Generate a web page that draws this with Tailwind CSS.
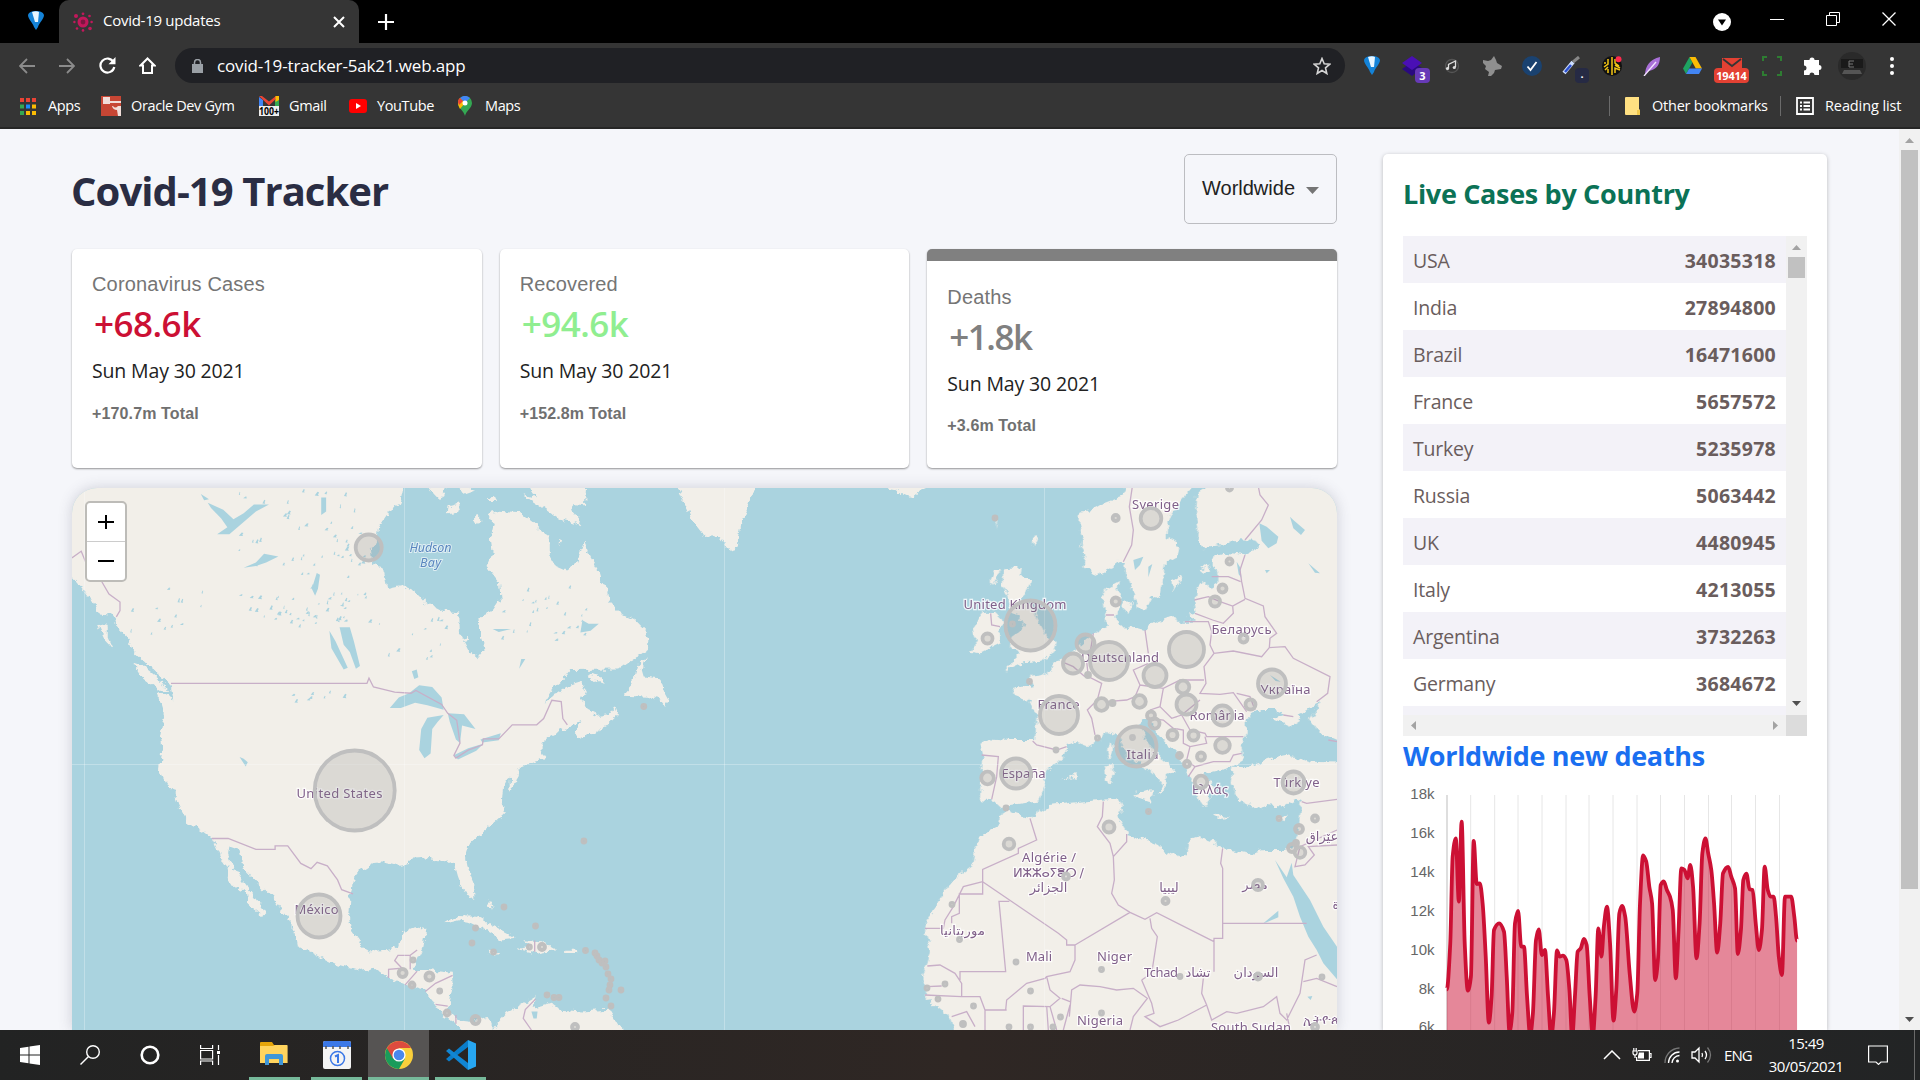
<!DOCTYPE html>
<html lang="en">
<head>
<meta charset="utf-8">
<title>Covid-19 updates</title>
<script src="https://cdn.jsdelivr.net/npm/@tailwindcss/browser@4"></script>
</head>
<body class="w-[1920px] h-[1080px] overflow-hidden flex flex-col bg-[#f5f6fa] font-['Open_Sans','Noto_Sans',sans-serif]">

<!-- Tab strip -->
<div class="h-[43px] shrink-0 bg-black flex text-white">
  <div class="w-[59px] flex items-center justify-center pl-3 pb-0.5">
    <svg class="w-4 h-[19px]" viewBox="0 0 16 19"><path d="M0 4C1 1 4 0 8 0s7 1 8 4c0 4-5 8-6 12l-2 3-2-3C5 12 0 8 0 4Z" fill="#1483d8"/><path d="M4 1C7 0 9 0 11 1l-1 10H7Z" fill="#e8f6ff"/></svg>
  </div>
  <div class="w-[300px] h-full bg-[#353535] rounded-t-[10px] flex items-center px-[14px]">
    <svg class="w-5 h-5 shrink-0" viewBox="0 0 20 20" fill="#c2185b"><circle cx="10" cy="10" r="5.5"/><circle cx="10" cy="10" r="2.4" fill="#7d1640"/><circle cx="3" cy="4" r="2"/><circle cx="10" cy="1.8" r="1.4"/><circle cx="16.5" cy="4" r="1.3"/><circle cx="1.4" cy="10" r="1.2"/><circle cx="18.6" cy="10" r="1.3"/><circle cx="4" cy="16.5" r="1.3"/><circle cx="10" cy="18.4" r="1.3"/><circle cx="17" cy="16.5" r="1.8"/></svg>
    <span class="ml-[10px] text-[15px] tracking-[-0.27px] flex-1 whitespace-nowrap pb-0.5">Covid-19 updates</span>
    <svg class="w-3 h-3" viewBox="0 0 12 12" stroke="#fff" stroke-width="2"><path d="M1 1l10 10M11 1L1 11"/></svg>
  </div>
  <div class="w-[54px] flex items-center justify-center"><svg class="w-4 h-4" viewBox="0 0 16 16" stroke="#fff" stroke-width="2.2"><path d="M8 0v16M0 8h16"/></svg></div>
  <div class="flex-1"></div>
  <div class="w-[55px] flex items-center"><svg class="w-[18px] h-[18px]" viewBox="0 0 18 18"><circle cx="9" cy="9" r="9" fill="#fff"/><path d="M5 6.5h8L9 12.5Z" fill="#000"/></svg></div>
  <div class="w-[152px] h-[38px] flex items-center gap-[42px] pl-[2px]">
    <svg class="w-[14px] h-[14px]" viewBox="0 0 14 14" stroke="#fff"><path d="M0 7.5h14"/></svg>
    <svg class="w-[14px] h-[14px]" viewBox="0 0 14 14" stroke="#fff" fill="none"><path d="M.5 3.5h10v10H.5ZM3.5 3V.5h10v10H11"/></svg>
    <svg class="w-[14px] h-[14px]" viewBox="0 0 14 14" stroke="#fff" stroke-width="1.3"><path d="M.5 .5l13 13M13.5 .5l-13 13"/></svg>
  </div>
</div>

<!-- Toolbar -->
<div class="h-[45px] shrink-0 bg-[#353535] flex items-center text-white">
  <div class="w-[175px] flex items-center gap-6 pl-[19px]">
    <svg class="w-4 h-4" viewBox="0 0 16 16" stroke="#8b8b8b" stroke-width="1.8" fill="none"><path d="M8 1L1 8l7 7M1 8h15"/></svg>
    <svg class="w-4 h-4" viewBox="0 0 16 16" stroke="#8b8b8b" stroke-width="1.8" fill="none"><path d="M8 1l7 7-7 7M0 8h15"/></svg>
    <svg class="w-[17px] h-[17px]" viewBox="0 0 17 17" stroke="#fff" stroke-width="2.2" fill="none"><path d="M14.5 5A7 7 0 1 0 15.3 10"/><path d="M16.5 0v7.200h-7Z" fill="#fff" stroke="none"/></svg>
    <svg class="-ml-px w-[17px] h-[17px]" viewBox="0 0 17 17" stroke="#fff" stroke-width="2" fill="none"><path d="M8.500 1.500L1.500 8.500H4V16h9V8.500h2.500Z"/></svg>
  </div>
  <div class="w-[1170px] h-[35px] bg-[#202125] rounded-full flex items-center pl-[17px] pr-[14px]">
    <svg class="w-[11px] h-[14px]" viewBox="0 0 11 14"><path d="M0 5h11v9H0Z" fill="#9aa0a6"/><path d="M2.500 5.500V3.500a3 3 0 0 1 6 0v2" stroke="#9aa0a6" stroke-width="1.500" fill="none"/></svg>
    <span class="ml-[14px] text-[17px] tracking-[-0.16px] flex-1">covid-19-tracker-5ak21.web.app</span>
    <svg class="w-[18px] h-[18px]" viewBox="0 0 18 18" stroke="#d4d4d4" stroke-width="1.600" fill="none"><path d="M9 1.500l2.200 5.300 5.600.4-4.300 3.700 1.300 5.600L9 13.500l-4.800 3 1.300-5.600L1.200 7.200l5.600-.4Z"/></svg>
  </div>
  <div class="w-[561px] pl-[7px] grid grid-cols-[repeat(14,40px)] justify-items-center items-center">
    <svg class="w-4 h-[19px]" viewBox="0 0 16 19"><path d="M0 4C1 1 4 0 8 0s7 1 8 4c0 4-5 8-6 12l-2 3-2-3C5 12 0 8 0 4Z" fill="#1483d8"/><path d="M4 1C7 0 9 0 11 1l-1 10H7Z" fill="#e8f6ff"/></svg>
    <div class="relative"><svg class="w-5 h-5" viewBox="0 0 20 20"><path d="M10 6l10 6-10 8L0 13Z" fill="#2a0a80"/><path d="M10 0l10 7-10 7L0 7Z" fill="#4a0fb5"/></svg><span class="absolute left-[13px] top-[12px] w-[15px] h-[15px] rounded-sm bg-[#673ab7] text-[11px] font-bold leading-[15px] text-center">3</span></div>
    <svg class="w-4 h-4" viewBox="0 0 16 16"><circle cx="8" cy="8" r="6.500" fill="none" stroke="#555" stroke-width="1.300"/><path d="M4.500 10V6.500L11.500 3v6" stroke="#ddd" stroke-width="1.300" fill="none"/><circle cx="3.500" cy="10.500" r="1.600" fill="#ddd"/><circle cx="10.300" cy="9.500" r="1.600" fill="#ddd"/></svg>
    <svg class="w-5 h-5" viewBox="0 0 20 20" fill="#8f8f8f"><path d="M1 4l5 1 3-1 3-4 2 4 1 3 5 3-1 3-6 1-1 3-3 3H6l1-4-4-3 1-3-3-3Z"/></svg>
    <svg class="w-5 h-5" viewBox="0 0 20 20"><circle cx="10" cy="10" r="10" fill="#1a4270"/><path d="M5.500 10.500l3 3.500 6-8" stroke="#fff" stroke-width="1.800" fill="none"/></svg>
    <div class="relative"><svg class="w-5 h-5" viewBox="0 0 20 20"><path d="M2 17L11 6" stroke="#cfe0ff" stroke-width="4"/><path d="M3 16L9 9" stroke="#2b50d0" stroke-width="2.500"/><path d="M11 6l6-5" stroke="#888" stroke-width="3"/></svg><span class="absolute left-[13px] top-[12px] w-[14px] h-[15px] rounded-sm bg-[#262a44] text-[11px] font-bold leading-[12px] text-center">.</span></div>
    <svg class="w-5 h-5" viewBox="0 0 20 20"><circle cx="10" cy="10" r="10" fill="#111"/><path d="M10 1v18M6 3v5L2 11M6 17v-4M3 14l3-3M13 3v4l4 3M13 17v-5l5 2M13 9l5 3M2 7h2" stroke="#f3c615" stroke-width="1.500" fill="none"/><circle cx="16.500" cy="3.200" r="3" fill="#ff2a4d"/></svg>
    <svg class="w-5 h-5" viewBox="0 0 20 20"><path d="M3 19C3 10 8 3 18 1c0 8-4 13-12 14Z" fill="#a970d8"/><path d="M2 20L14 6" stroke="#f3e5ff" stroke-width="1.300"/></svg>
    <svg class="w-[19px] h-[17px]" viewBox="0 0 19 17"><path d="M6.500 0L0 11.500 3 17 9.500 5.500Z" fill="#1ea362"/><path d="M6.500 0H12.500L19 11.500H12.800Z" fill="#fbbc04"/><path d="M3 17L6.200 11.500H19L16 17Z" fill="#4285f4"/></svg>
    <div class="relative"><svg class="w-5 h-5" viewBox="0 0 20 20"><path d="M0 2h20v12H0Z" fill="#e34133"/><path d="M1 3l9 7 9-7" stroke="#353535" stroke-width="1.800" fill="none"/></svg><span class="absolute left-[-8px] top-[12px] w-[35px] h-[15px] rounded-sm bg-[#e34133] text-[11px] font-bold leading-[15px] text-center tracking-[-0.2px]">19414</span></div>
    <svg class="w-5 h-5" viewBox="0 0 20 20" fill="none" stroke="#2e7d32" stroke-width="2"><path d="M1 5V1h4M15 1h4v4M19 15v4h-4M5 19H1v-4"/></svg>
    <svg class="w-[19px] h-[19px]" viewBox="0 0 19 19" fill="#fff"><path d="M1 4h5.500a2.500 2.500 0 1 1 5 0H16v5a2.500 2.500 0 1 1 0 5v5h-4.500a2.400 2.400 0 0 0-5 0H1v-4.500a2.500 2.500 0 0 0 0-5Z"/></svg>
    <svg class="w-7 h-7" viewBox="0 0 28 28"><circle cx="14" cy="14" r="14" fill="#2a2a2a"/><path d="M3 7h22v9H3Z" fill="#1a1a1a"/><path d="M11 9h5M11 9v6h5M11 12h4" stroke="#777" fill="none"/><path d="M6 18h16l2 4H4Z" fill="#555"/></svg>
    <svg class="w-1 h-5" viewBox="0 0 4 20" fill="#fff"><circle cx="2" cy="3" r="2"/><circle cx="2" cy="10" r="2"/><circle cx="2" cy="17" r="2"/></svg>
  </div>
</div>

<!-- Bookmarks bar -->
<div class="h-[41px] shrink-0 bg-[#353535] border-b-2 border-[#262626] flex items-center text-white text-[14.5px] tracking-[-0.37px] pl-[20px] pr-[18px] pb-[3px] whitespace-nowrap">
  <div class="w-[81px] flex items-center gap-3"><svg class="w-4 h-[17px]" viewBox="0 0 16 17"><g fill="#ea4335"><path d="M0 0h4v4H0ZM6 0h4v4H6ZM12 0h4v4h-4Z"/></g><path d="M0 6.500h4v4H0ZM0 13h4v4H0Z" fill="#34a853"/><path d="M6 6.500h4v4H6Z" fill="#1a8cff"/><path d="M12 6.500h4v4h-4ZM6 13h4v4H6ZM12 13h4v4h-4Z" fill="#fbbc04"/></svg>Apps</div>
  <div class="w-[158px] flex items-center gap-[10px]"><svg class="w-5 h-5" viewBox="0 0 20 20"><path d="M0 0h20v20H0Z" fill="#c74634"/><path d="M2 1h7v7H2Z" fill="#f1ddd9"/><path d="M9 5h11v2H9ZM12 10q2 3 5 0h3v10h-3l-1-6q-4 0-5-4Z" fill="#f1ddd9"/></svg>Oracle Dev Gym</div>
  <div class="w-[90px] flex items-center gap-[10px]"><svg class="w-5 h-5" viewBox="0 0 20 20"><path d="M0 1v9h4V4Z" fill="#4285f4"/><path d="M20 1v9h-4V4Z" fill="#34a853"/><path d="M0 0h3l7 5.500L17 0h3L10 9.500Z" fill="#ea4335"/><path d="M16.500 0H20v4l-3.500 2Z" fill="#fbbc04"/><path d="M0 10h20v10H0Z" fill="#eee"/><text x="0" y="19" font-size="10" font-weight="bold" textLength="20" lengthAdjust="spacingAndGlyphs" fill="#000" letter-spacing="0">100+</text></svg>Gmail</div>
  <div class="w-[109px] flex items-center gap-[10px]"><svg class="w-[18px] h-[14px]" viewBox="0 0 18 14"><rect width="18" height="14" rx="3" fill="#f00"/><path d="M7 4l5 3-5 3Z" fill="#fff"/></svg>YouTube</div>
  <div class="flex-1 flex items-center gap-[13px]"><svg class="w-[14px] h-5" viewBox="0 0 14 20"><path d="M7 20C6 15 0 12 0 7a7 7 0 0 1 14 0c0 5-6 8-7 13Z" fill="#34a853"/><path d="M0 7a7 7 0 0 1 2-5l5 5-5 6C1 11 0 9 0 7Z" fill="#fbbc04"/><path d="M2 2a7 7 0 0 1 10 0L7 7Z" fill="#4285f4"/><path d="M0 6q0-3 2-4l3 3-4 4Z" fill="#ea4335"/><circle cx="7" cy="7" r="2.500" fill="#fff"/></svg>Maps</div>
  <div class="w-px h-5 bg-[#6b6b6b]"></div>
  <svg class="ml-[15px] w-[15px] h-[18px]" viewBox="0 0 15 18"><path d="M0 1q0-1 1-1h13v12l1 1v5H1q-1 0-1-1Z" fill="#ffe082"/><path d="M12 13h3v5h-3Z" fill="#f2c94c"/></svg>
  <div class="ml-3 w-[116px] tracking-[-0.22px]">Other bookmarks</div>
  <div class="ml-3 w-px h-5 bg-[#6b6b6b]"></div>
  <svg class="ml-[15px] w-[18px] h-[18px]" viewBox="0 0 18 18" stroke="#fff" fill="none" stroke-width="1.800"><path d="M1 1h16v16H1ZM7.500 5.500H14M7.500 9H14M7.500 12.500H14M4 5.500h2M4 9h2M4 12.500h2"/></svg>
  <div class="ml-[11px] w-[77px] tracking-[-0.1px]">Reading list</div>
</div>

<!-- Page -->
<main class="flex-1 min-h-0 flex overflow-hidden">
  <section class="ml-[72px] w-[1265px] pt-[25px] flex flex-col shrink-0">
    <header class="flex justify-between items-start h-[95px]">
      <h1 class="text-[#2a2d43] font-bold text-[40px] leading-[54px] mt-[10px] -ml-px tracking-[-0.93px]">Covid-19 Tracker</h1>
      <div class="w-[153px] h-[70px] rounded-[5px] border border-[#bcbdc1] flex items-start pl-[17px] pt-[21px] text-[20px] leading-6 text-[#222] font-['Liberation_Sans',sans-serif]">Worldwide<svg class="ml-[11px] mt-[11px] w-[13px] h-[7px]" viewBox="0 0 13 7"><path d="M0 0h13L6.500 7Z" fill="#757575"/></svg></div>
    </header>
    <div class="grid grid-cols-3 gap-[18px] h-[219px]">
      <article class="bg-white rounded-[5px] shadow-[0_1px_2px_rgba(0,0,0,.4)] px-5 pt-[21px]">
        <p class="font-['Liberation_Sans',sans-serif] text-[20px] leading-7 text-[#757575] tracking-[0.17px]">Coronavirus Cases</p>
        <h2 class="text-[#cc1034] font-semibold text-[35px] leading-[52px] pl-[2px] tracking-[-0.5px]">+68.6k</h2>
        <p class="text-[19.500px] leading-7 mt-[7px] text-[#222] tracking-[-0.15px]">Sun May 30 2021</p>
        <p class="font-['Liberation_Sans',sans-serif] font-bold text-[16px] leading-6 mt-[17px] text-[#707070] tracking-[0.13px]">+170.7m Total</p>
      </article>
      <article class="bg-white rounded-[5px] shadow-[0_1px_2px_rgba(0,0,0,.4)] px-5 pt-[21px]">
        <p class="font-['Liberation_Sans',sans-serif] text-[20px] leading-7 text-[#757575] tracking-[0.17px]">Recovered</p>
        <h2 class="text-[#90ee90] font-semibold text-[35px] leading-[52px] pl-[2px] tracking-[-0.5px]">+94.6k</h2>
        <p class="text-[19.500px] leading-7 mt-[7px] text-[#222] tracking-[-0.15px]">Sun May 30 2021</p>
        <p class="font-['Liberation_Sans',sans-serif] font-bold text-[16px] leading-6 mt-[17px] text-[#707070] tracking-[0.13px]">+152.8m Total</p>
      </article>
      <article class="bg-white rounded-[5px] border-t-[12px] border-[#808080] shadow-[0_1px_2px_rgba(0,0,0,.4)] px-5 pt-[22px]">
        <p class="font-['Liberation_Sans',sans-serif] text-[20px] leading-7 text-[#757575] tracking-[0.17px]">Deaths</p>
        <h2 class="text-[#808080] font-semibold text-[35px] leading-[52px] pl-[2px] tracking-[-1.5px]">+1.8k</h2>
        <p class="text-[19.500px] leading-7 mt-[7px] text-[#222] tracking-[-0.15px]">Sun May 30 2021</p>
        <p class="font-['Liberation_Sans',sans-serif] font-bold text-[16px] leading-6 mt-[16px] text-[#707070] tracking-[0.13px]">+3.6m Total</p>
      </article>
    </div>
    <div class="relative mt-[20px] h-[542px] bg-[#aad3df] rounded-t-[25px] overflow-hidden shadow-[0_0_14px_rgba(70,70,90,.22)] shrink-0">
      <svg class="w-[1265px] h-[542px]" viewBox="72 488 1265 542" font-family="Noto Sans, DejaVu Sans, sans-serif" font-size="13">
        <filter id="coast" filterUnits="userSpaceOnUse" x="60" y="480" width="1290" height="560"><feTurbulence type="fractalNoise" baseFrequency=".14" numOctaves="3" seed="4"/><feDisplacementMap in="SourceGraphic" scale="8" xChannelSelector="R" yChannelSelector="G"/></filter>
        <g fill="#f2efe9" filter="url(#coast)">
          <g id="west" transform="translate(60,480) scale(.40816,.35077)">
            <path d="M5 0L845 0 835 60 828 75 800 95 780 130 775 170 762 200 765 240 790 245 802 308 835 300 870 318 890 345 935 372 978 378 980 440 1000 485 1022 508 1042 480 1030 440 1025 392 1060 375 1080 340 1075 290 1045 245 1060 205 1055 165 1062 130 1050 95 1075 88 1130 92 1160 120 1185 150 1200 160 1200 215 1215 245 1240 258 1265 240 1285 175 1300 220 1320 260 1325 280 1340 310 1345 345 1375 380 1410 400 1440 435 1438 485 1400 515 1370 540 1250 542 1235 565 1210 590 1185 635 1215 610 1240 590 1280 575 1290 600 1280 625 1290 655 1320 672 1345 668 1358 645 1367 670 1340 700 1270 740 1258 720 1275 690 1245 705 1200 730 1180 750 1180 775 1192 795 1160 805 1125 820 1115 860 1100 895 1103 845 1088 870 1085 920 1093 950 1060 985 1020 1020 1000 1040 993 1065 1000 1110 1015 1150 1015 1190 1003 1192 985 1160 975 1130 968 1100 950 1085 930 1090 905 1075 880 1078 855 1080 855 1095 835 1100 800 1090 765 1092 735 1115 718 1140 712 1185 708 1250 715 1285 740 1325 765 1348 800 1340 830 1330 840 1290 870 1275 898 1280 890 1330 875 1365 865 1397 900 1397 960 1405 962 1440 955 1490 950 1510 975 1540 1010 1545 1035 1530 1060 1550 1060 1590 1000 1590 970 1550 930 1515 915 1490 890 1455 850 1440 805 1420 770 1390 735 1400 670 1378 630 1355 580 1325 575 1290 555 1245 520 1190 480 1145 450 1105 440 1055 415 1045 412 1065 425 1105 445 1140 470 1180 490 1210 505 1235 497 1245 460 1210 455 1175 425 1160 408 1130 412 1110 395 1080 372 1020 350 1000 312 975 290 925 280 890 258 860 245 825 250 780 245 730 255 670 238 605 278 625 270 580 215 530 180 490 165 450 140 420 130 385 95 380 75 340 45 295 5 240Z"/>
            <path d="M1060 1590L1060 1568 1095 1515 1130 1495 1165 1470 1158 1505 1200 1490 1225 1510 1280 1515 1345 1510 1365 1550 1410 1590ZM1440 500L1425 540 1430 560 1470 565 1480 600 1492 625 1485 650 1470 625 1440 618 1380 615 1400 590 1415 530ZM178 520L205 530 245 570 268 605 245 600 200 560ZM93 412L117 420 117 450 130 483 112 460ZM940 1265L970 1243 1020 1245 1060 1270 1118 1305 1080 1310 1050 1285 1010 1262 975 1255ZM1135 1312L1180 1315 1218 1340 1172 1350 1120 1338 1152 1330ZM1240 1342h27v9h-27ZM1050 1342l30 6-10 8-18-5ZM1288 552L1320 560 1335 578 1310 572ZM1050 1195l8 12 2 18-10-18ZM890 0l60 0-20 60-18-22ZM960 0l60 30-30 12ZM952 75l25-8 5 15-22 18-10-10ZM1017 95l10 5 0 25-10-5ZM1045 55l15-5 12 10-20 0ZM1138 0L1290 0 1286 75 1262 72 1252 85 1283 130 1230 105 1190 75 1165 50ZM1130 40l60 20 80 68-45-15-50-40ZM985 450l15-5 5 10-15 3ZM1220 170l8 5-5 10Z"/>
          </g>
          <path d="M678 480L678 488 686 506 694 524 704 537 718 536 726 547 733 551 738 545 742 520 748 505 755 488 755 480ZM883 480L883 488 895 490 902 495 912 497 920 491 927 488 927 480Z"/>
          <g id="east" transform="translate(900,480) scale(.33333)">
            <path d="M690 0L665 50 600 75 575 90 540 95 538 130 550 165 540 200 558 235 553 262 590 285 625 270 660 245 675 250 680 290 700 340 715 390 740 385 755 355 780 345 790 290 795 250 830 230 838 205 825 185 800 170 803 120 830 80 880 20 960 0 890 40 885 95 895 150 890 180 910 205 960 195 1030 178 1070 185 1080 200 1035 225 985 220 935 230 935 260 955 275 955 310 930 325 910 300 888 325 883 365 890 400 860 408 885 425 830 425 820 408 760 430 735 450 700 440 680 448 660 430 645 410 655 380 665 350 655 330 660 303 620 325 608 350 615 400 620 440 580 460 555 480 530 500 500 535 465 545 460 570 430 585 390 590 400 615 335 630 345 645 385 660 410 700 405 780 330 780 265 775 240 795 250 830 245 870 243 958 280 962 305 985 330 975 375 968 415 965 435 915 430 890 455 860 500 820 500 795 530 785 570 800 600 775 630 755 655 770 680 830 715 850 750 872 775 895 790 915 768 945 780 940 800 915 797 885 828 880 800 850 765 820 735 775 720 740 725 715 750 715 760 745 800 790 835 820 850 850 865 880 880 905 890 935 895 960 915 985 930 965 925 945 955 940 925 900 915 880 960 870 1000 860 1030 840 1025 800 1040 760 1040 720 1060 700 1090 690 1120 690 1150 705 1118 715 1170 740 1210 715 1190 705 1240 680 1265 665 1230 720 1260 760 1340 795 1340 0Z"/>
            <path d="M310 265L365 262 362 290 395 300 375 340 355 360 390 370 415 420 440 470 470 485 462 520 420 545 370 550 315 575 345 540 365 520 330 500 335 470 350 460 372 440 355 405 335 400 325 350 308 320ZM250 400L285 395 310 420 300 440 302 490 240 520 213 515 230 490 218 440ZM635 785l4 30-10 25-8-30ZM612 860l26-8 3 30-8 25-18-5ZM700 940L760 930 752 965 712 952ZM936 1003l58 10-40 4ZM1130 1015l35-12-15 18ZM820 300l25-12-22 45ZM665 370l30-8-10 40-15-15ZM405 165l10 10-12 30-4-20ZM285 270l15 0-20 45-8-15ZM288 103l6 8-6 32ZM900 270l25-20 5 25-18 4ZM485 900l20-8 25-10 0 12-15-3-20 10Z"/>
            <path d="M1000 860L1040 862 1130 830 1160 825 1230 845 1340 848 1340 1125 1200 1125 1195 1050 1205 965 1190 958 1150 980 1100 975 1080 990 1040 975 1010 950 995 910Z"/>
            <path d="M315 990L325 990 345 1000 390 1015 450 975 540 965 600 960 655 955 668 980 655 1010 680 1050 680 1065 760 1085 790 1110 845 1132 860 1120 865 1080 900 1068 935 1080 970 1105 1040 1120 1095 1110 1150 1110 1175 1105 1200 1050 1340 1050 1340 1690 170 1690 150 1610 110 1580 75 1550 80 1525 65 1490 80 1460 90 1410 75 1350 80 1320 110 1280 130 1240 160 1200 215 1160 225 1110 240 1070 290 1040 300 1010Z"/>
          </g>
        </g>
        <g fill="#aad3df">
          <g transform="translate(900,480) scale(.33333)">
            <path d="M1125 1140L1160 1192 1175 1148 1180 1185 1230 1260 1270 1340 1311 1400 1311 1498 1270 1450 1250 1410 1225 1370 1200 1310 1180 1250 1150 1195ZM1078 130L1100 140 1135 170 1130 190 1105 205 1085 182ZM1170 110L1180 120 1215 150 1203 165 1180 145ZM1225 250l35 30-15-2ZM1095 270l15 0-10 10ZM700 240l30-10-10 25-15 15ZM745 260l12-8-12 40ZM540 480l12-8 0 20-10 8ZM1110 585l32 20-15-2ZM1010 245l12 20 2 28-8-10ZM1090 1330l45-38 0 20-35 15ZM1222 1550l15-2-5 12Z"/>
          </g>
          <g transform="translate(60,480) scale(.40816,.35077)">
            <path d="M808 650L830 620 855 608 880 585 912 590 935 620 940 655 900 642 870 635 835 650ZM900 678L940 670 925 690 912 710 908 780 893 793 880 770 885 710ZM950 665L990 668 1018 710 985 700 980 750 970 740 955 690ZM965 785L1000 765 1037 752 1020 772 975 797ZM1030 740L1080 722 1075 742 1035 748ZM685 420L710 420 720 460 735 530 725 538 710 490 695 470ZM660 430l15 30 30 75-10 5-30-60ZM385 155L410 135 395 110 370 80 362 65 400 85 425 112 450 95 475 70 512 70 480 90 440 130 415 155ZM450 250L480 235 500 210 535 218 505 235 480 245ZM625 330l-8-20 12-45 8 5-5 40ZM640 50l12 0 0 40-12 10ZM862 545l12-5 4 22-10 5ZM1280 400l15 10 25 0-20 20-25 5ZM1060 425l35 0 10 0-30 8ZM1130 510l10 0-15 28ZM440 790l10 5 10 10-5 12ZM1155 1515l15 0-2 20-8 0ZM345 40l20 15-12 3ZM820 870l2-15Z"/>
            <g id="lakes"></g>
          </g>
        </g>
        <g fill="none" stroke="#c8afc8" stroke-width="1.300">
          <g transform="translate(60,480) scale(.40816,.35077)">
            <path vector-effect="non-scaling-stroke" d="M29 222L52 203 65 240M100 285L120 325 147 348 147 372 138 390M272 580H752L757 565 768 590 820 605 860 608 872 600 935 640 950 665 972 685 980 750 965 785 970 793 1000 770 1035 755 1037 738 1075 738 1108 698 1168 698 1185 680 1205 628 1228 632 1232 680 1243 698M372 1022H412L480 1053H527V1043H558L590 1093 615 1108 630 1090 655 1100 680 1140 690 1168 718 1180M805 1420V1395L838 1392 820 1370 828 1355H858V1395M845 1440L875 1400M895 1458L920 1435 962 1412M920 1495L950 1500M970 1525V1550M1165 1480L1140 1510 1135 1535 1155 1568M1163 1313V1345M858 1355L875 1340"/>
          </g>
          <g transform="translate(900,480) scale(.33333)">
            <path vector-effect="non-scaling-stroke" d="M697 20L688 80 700 150 695 195 670 245M1075 20L1080 45 1105 75 1085 120 1035 180M1035 225L1020 270 1025 305 1035 355 1090 378 1095 410 1130 460 1110 475 1108 503 1155 500 1180 535 1290 590 1283 640 1250 665M935 290L985 290 1022 305M883 360L925 350 960 365 998 378 1035 358M998 378L1000 400 970 430 938 420 885 400M855 425H925L935 455 930 495 942 520 1000 513 1085 530 1108 503M942 520L912 560 918 610 900 640 960 643 1000 638 1040 695M1010 640L1050 650 1065 690M735 450L745 520M745 550L700 570 720 615 705 650 680 660 620 665M580 460L570 520 560 545 565 590 605 610 592 660 562 690 575 715 585 765M485 545L520 560 555 590M720 615L790 625 840 600 912 600M790 625L780 680 750 690M780 680L815 715 845 705 900 660M845 705L870 750 915 760 920 770 1030 770M750 715L790 720 820 745 850 750 850 790 870 800 920 790 915 770M870 800L860 840 885 860 940 845 990 845 1000 825 1025 820M865 890L885 860M398 783L410 795 470 810 500 800M245 825L295 830 290 890 275 958M272 400L275 435 300 440M618 405H642M1150 705L1180 710M1285 780L1311 785M1205 965L1220 970 1311 958M1311 1050L1200 1100 1185 1160 1215 1155 1243 1125 1225 1100 1311 1095"/>
            <path vector-effect="non-scaling-stroke" d="M390 1015L410 1080 355 1105 355 1120 248 1168V1242H178V1300L155 1310V1330M248 1205L190 1220 160 1280 135 1320 130 1345H75M248 1205L475 1360 500 1380V1395H525V1440L510 1475 440 1490 435 1495 380 1510 320 1560 317 1590M328 1264H297L317 1475H180V1500M610 965L607 1010 592 1040 630 1090 640 1130 643 1200 635 1240 655 1275 690 1297 735 1318 770 1298 942 1385M680 1062V1085L640 1130M690 1297L525 1395M968 1105L962 1150 968 1165V1375H942V1475M968 1330H1220M750 1315L755 1345 772 1370 755 1480 725 1500M82 1458L120 1455 165 1480 185 1510V1550M75 1545L185 1550 240 1550 255 1590 320 1590M508 1610L515 1530 540 1515 600 1520 650 1530 700 1525 742 1555 700 1610 690 1650M725 1500L755 1570 762 1600 735 1610 780 1640 835 1620 920 1575 905 1540 910 1495M920 1575L935 1620 980 1595 1010 1600 1090 1580 1130 1550 1140 1600 1160 1620 1200 1540 1215 1440 1250 1425M1210 1505L1250 1495 1311 1520M440 1490L450 1530 480 1555 450 1580 370 1578V1650M440 1578L445 1650M450 1580L470 1650M485 1555L510 1565M490 1650L510 1575M255 1590L255 1650M155 1610L200 1595 225 1640M1160 1600L1170 1650M80 1520L125 1518"/>
          </g>
        </g>
        <path d="M84.500 488v542M404.500 488v542M724.500 488v542M1044.500 488v542M72 764.500h1266" stroke="#fff" stroke-opacity=".28" fill="none"/>
        <g fill="#80608a" text-anchor="middle" stroke="#fff" stroke-opacity=".8" stroke-width="2.500" paint-order="stroke">
          <text x="339.500" y="798" textLength="86">United States</text>
          <text x="316.500" y="914" textLength="44">México</text>
          <text x="1155.500" y="509" textLength="47">Sverige</text>
          <text x="1015" y="609" textLength="103">United Kingdom</text>
          <text x="1241.500" y="634" textLength="60">Беларусь</text>
          <text x="1120" y="662" textLength="78">Deutschland</text>
          <text x="1285.500" y="694" textLength="50">Україна</text>
          <text x="1058.500" y="709" textLength="42">France</text>
          <text x="1217" y="720" textLength="55">România</text>
          <text x="1142.500" y="759" textLength="32">Italia</text>
          <text x="1023.500" y="778" textLength="44">España</text>
          <text x="1210" y="794" textLength="36">Ελλάς</text>
          <text x="1296.500" y="787" textLength="46">Türkiye</text>
          <text x="1049" y="862" textLength="54">Algérie /</text>
          <text x="1048.500" y="877" font-family="DejaVu Sans" textLength="71">ⵍⵣⵣⴰⵢⴻⵔ /</text>
          <text x="1048.500" y="892" font-family="DejaVu Sans">الجزائر</text>
          <text x="1169" y="892" font-family="DejaVu Sans">ليبيا</text>
          <text x="1255" y="889" font-family="DejaVu Sans">مصر</text>
          <text x="1322" y="841" font-family="DejaVu Sans">عێراق</text>
          <text x="1336" y="909" font-family="DejaVu Sans">ة</text>
          <text x="962.500" y="935" font-family="DejaVu Sans" textLength="45">موريتانيا</text>
          <text x="1039" y="961" textLength="26">Mali</text>
          <text x="1114.500" y="961" textLength="35">Niger</text>
          <text x="1161" y="977" textLength="34">Tchad</text>
          <text x="1198" y="977" font-family="DejaVu Sans">تشاد</text>
          <text x="1256" y="977" font-family="DejaVu Sans">السودان</text>
          <text x="1100" y="1025" textLength="46">Nigeria</text>
          <text x="1251" y="1032" textLength="80">South Sudan</text>
          <text x="1303" y="1024" text-anchor="start">ኢትዮጵያ</text>
        </g>
        <g fill="#5a87bf" text-anchor="middle" font-style="italic" stroke="#fff" stroke-opacity=".6" stroke-width="2" paint-order="stroke" font-size="12.500"><text x="430.500" y="552" textLength="42">Hudson</text><text x="430.500" y="567" textLength="21">Bay</text></g>
        <g id="cases" fill="#808080" fill-opacity=".2" stroke="#bfbfbf" stroke-width="3.800"></g>
      </svg>
      <div class="absolute left-[13px] top-[13px] w-[42px] h-[81px] rounded-[5px] border-2 border-[#bdbcb8] bg-white grid grid-rows-2 divide-y divide-[#ccc]">
        <div class="grid place-items-center"><svg class="w-4 h-4" viewBox="0 0 16 16" stroke="#000" stroke-width="2"><path d="M8 1v14M0 8h16"/></svg></div>
        <div class="grid place-items-center"><svg class="w-4 h-4" viewBox="0 0 16 16" stroke="#000" stroke-width="2"><path d="M0 8h16"/></svg></div>
      </div>
    </div>
  </section>

  <aside class="ml-[46px] mt-[25px] w-[444px] bg-white rounded-t-[5px] shadow-[0_1px_4px_rgba(0,0,0,.25)] px-5 shrink-0">
    <h3 class="text-[#0b7256] font-bold text-[27px] leading-9 pt-[22px] tracking-[-0.32px] whitespace-nowrap">Live Cases by Country</h3>
    <div class="mt-[24px] w-[404px] grid grid-cols-[383px_21px]">
      <div id="countries" class="h-[479px] overflow-hidden text-[#6a5d5d] text-[19.500px]"></div>
      <div class="bg-[#f1f1f1] flex flex-col items-center justify-between pt-[9px] pb-[9px]">
        <div class="flex flex-col items-center gap-[7px]"><svg class="w-[9px] h-[5px]" viewBox="0 0 9 5"><path d="M0 5h9L4.500 0Z" fill="#a3a3a3"/></svg><div class="w-[17px] h-[21px] bg-[#c1c1c1]"></div></div>
        <svg class="w-[9px] h-[5px]" viewBox="0 0 9 5"><path d="M0 0h9L4.500 5Z" fill="#505050"/></svg>
      </div>
      <div class="h-[21px] bg-[#f1f1f1] flex items-center justify-between px-2">
        <svg class="w-[5px] h-[9px]" viewBox="0 0 5 9"><path d="M5 0v9L0 4.500Z" fill="#a3a3a3"/></svg>
        <svg class="w-[5px] h-[9px]" viewBox="0 0 5 9"><path d="M0 0v9L5 4.500Z" fill="#a3a3a3"/></svg>
      </div>
      <div class="bg-[#dcdcdc]"></div>
    </div>
    <h3 class="text-[#1a6ff0] font-bold text-[27px] leading-9 pt-[2px] tracking-[-0.3px] whitespace-nowrap">Worldwide new deaths</h3>
    <svg class="mt-[9px] w-[404px] h-[250px]" viewBox="1403 783 404 250" font-family="Liberation Sans, sans-serif" font-size="15" fill="#666" text-anchor="end">
      <text x="1434.500" y="799">18k</text><text x="1434.500" y="838">16k</text><text x="1434.500" y="877">14k</text><text x="1434.500" y="916">12k</text><text x="1434.500" y="955">10k</text><text x="1434.500" y="994">8k</text><text x="1434.500" y="1032">6k</text>
      <path d="M1447 795v240" stroke="#bdbdbd"/>
      <path d="M1470.700 795v240M1494.700 795v240M1518 795v240M1542 795v240M1566 795v240M1589 795v240M1613 795v240M1637 795v240M1660.500 795v240M1684.500 795v240M1708.500 795v240M1731.500 795v240M1755.500 795v240M1779.500 795v240" stroke="#e6e6e6"/>
      <g transform="translate(1380,730) scale(.34439,.33333)">
        <path id="area" fill="#cc1034" fill-opacity=".5"/>
        <path id="line" fill="none" stroke="#cc1034" stroke-width="3.800" vector-effect="non-scaling-stroke" stroke-linejoin="round"/>
      </g>
    </svg>
  </aside>

  <div class="ml-auto w-[21px] bg-[#f1f1f1] flex flex-col items-center shrink-0 pt-[9px]">
    <svg class="w-[9px] h-[5px]" viewBox="0 0 9 5"><path d="M0 5h9L4.500 0Z" fill="#a3a3a3"/></svg>
    <div class="mt-[7px] w-[17px] h-[739px] bg-[#c1c1c1]"></div>
    <svg class="mt-[128px] w-[9px] h-[5px]" viewBox="0 0 9 5"><path d="M0 0h9L4.500 5Z" fill="#505050"/></svg>
  </div>
</main>

<!-- Taskbar -->
<footer class="relative z-10 h-[50px] shrink-0 bg-linear-to-r from-[#222323] via-[#2f2724] to-[#222425] flex text-white">
  <div class="w-[60px] flex items-center justify-center"><svg class="w-5 h-5" viewBox="0 0 20 20" fill="#fff"><path d="M0 3l8.500-1.200V9.500H0ZM9.500 1.600L20 0v9.500H9.500ZM0 10.500h8.500v7.700L0 17ZM9.500 10.500H20V20L9.500 18.400Z"/></svg></div>
  <div class="w-[60px] flex items-center justify-center"><svg class="w-5 h-5" viewBox="0 0 20 20" fill="none" stroke="#fff" stroke-width="1.400"><circle cx="13" cy="7" r="6.300"/><path d="M8.500 11.500L.5 19.500"/></svg></div>
  <div class="w-[60px] flex items-center justify-center"><svg class="w-5 h-5" viewBox="0 0 20 20" fill="none" stroke="#fff" stroke-width="2.600"><circle cx="10" cy="10" r="8.300"/></svg></div>
  <div class="w-[63px] flex items-center pl-[20px]"><svg class="w-5 h-5" viewBox="0 0 20 20" fill="none" stroke="#fff" stroke-width="1.200"><path d="M.6 0v3.500h12V0M.6 5.500h12v8.500H.6ZM.6 20v-4h12v4M18.500 0v5M18.500 10v10"/><path d="M17 6h3v3h-3Z" fill="#fff" stroke="none"/></svg></div>
  <div class="w-[62px] flex flex-col items-center justify-end gap-[11px]">
    <svg class="w-7 h-6" viewBox="0 0 28 24"><path d="M0 1q0-1 1-1h11l2 3h13v4H0Z" fill="#e5a50a"/><path d="M0 4h13l2-1h12q.6 0 .6 1v17H0Z" fill="#ffd45e"/><path d="M5 23V14q0-2 2-2h14q2 0 2 2v9h-4v-6H9v6Z" fill="#3f97d9"/></svg>
    <div class="w-[51px] h-[3px] bg-[#76b99a]"></div></div>
  <div class="w-[63px] flex flex-col items-center justify-end gap-[8px]">
    <svg class="w-7 h-7" viewBox="0 0 28 28"><rect width="28" height="28" rx="2" fill="#f4f4f4"/><path d="M0 2q0-2 2-2h24q2 0 2 2v4H0Z" fill="#3b78e7"/><path d="M3 5v3M10 5v3M17 5v3M25 5v3" stroke="#555" stroke-width="1.500"/><circle cx="14.500" cy="17.500" r="7" fill="none" stroke="#3b78e7" stroke-width="1.500"/><path d="M12 15.500l3-1.500v8" stroke="#3b78e7" stroke-width="2" fill="none"/></svg>
    <div class="w-[51px] h-[3px] bg-[#76b99a]"></div></div>
  <div class="w-[61px] flex flex-col items-center justify-end gap-[8px] bg-[#565453]">
    <svg class="w-7 h-7" viewBox="0 0 28 28"><circle cx="14" cy="14" r="14" fill="#f9cf3b"/><path d="M14 14L1.900 7A14 14 0 0 0 14 28l6-10.500Z" fill="#1a9c5b"/><path d="M14 7h12.100A14 14 0 0 0 1.900 7l6 10.500Z" fill="#dd4b3e"/><circle cx="14" cy="14" r="6.600" fill="#fff"/><circle cx="14" cy="14" r="5.300" fill="#4a88ee"/></svg>
    <div class="w-[61px] h-[3px] bg-[#76b99a]"></div></div>
  <div class="w-[63px] flex flex-col items-center justify-end gap-[7px]">
    <svg class="w-[30px] h-[30px]" viewBox="0 0 30 30"><path d="M22 7L3 21.500 0 19 22 0Z" fill="#0a7cc9"/><path d="M22 23L3 8.500 0 11l22 19Z" fill="#1186d4"/><path d="M22 0l8 3.500v23L22 30Z" fill="#27a7f2"/></svg>
    <div class="w-[51px] h-[3px] bg-[#76b99a]"></div></div>
  <div class="ml-auto w-[317px] flex items-center">
    <svg class="w-[18px] h-[10px]" viewBox="0 0 18 10" fill="none" stroke="#fff" stroke-width="1.500"><path d="M1 9l8-8 8 8"/></svg>
    <svg class="ml-[11px] w-[20px] h-[14px]" viewBox="0 0 20 14" fill="none" stroke="#fff" stroke-width="1.200"><path d="M6 2.600h11.400v9.800H4.600V9M17.400 5.500H19v4h-1.600"/><path d="M7 4.500h5v6H6V8Z" fill="#fff" stroke="none"/><path d="M1 3h4v2q0 2-2 2t-2-2ZM1.800 0v3M4.200 0v3M3 7v3"/></svg>
    <svg class="ml-[12px] w-[16px] h-[16px]" viewBox="0 0 16 16" fill="none" stroke="#fff" stroke-width="1.300"><path d="M1 16A15 15 0 0 1 15.500 1" stroke="#777"/><path d="M4.500 16A11 11 0 0 1 15.500 5M8 16a8 8 0 0 1 7.500-7.500"/><circle cx="13.500" cy="14" r="1.500" fill="#fff" stroke="none"/></svg>
    <svg class="ml-[11px] w-[21px] h-[18px]" viewBox="0 0 21 18" fill="none" stroke="#fff" stroke-width="1.300"><path d="M1 6h3l4-4v14l-4-4H1ZM11 7q1 2 0 4M14 5q3 4 0 8"/><path d="M16.500 1.500q6 7.500 0 15" stroke="#777"/></svg>
    <span class="ml-[12px] w-[30px] text-[15px] tracking-[-0.9px]">ENG</span>
    <div class="ml-[12px] w-[80px] text-center text-[15px] leading-[23px] tracking-[-0.5px] whitespace-nowrap">15:49<br>30/05/2021</div>
    <svg class="ml-[22px] w-[20px] h-[20px]" viewBox="0 0 20 20" fill="none" stroke="#fff" stroke-width="1.200"><path d="M.6 1h18.800v16h-6.500L10.500 19.400 8 17H.6Z"/></svg>
    <div class="ml-auto mr-[5px] w-px h-full bg-[#6a6a6a]"></div>
  </div>
</footer>

<script>
// Country table
const rows = [['USA',34035318],['India',27894800],['Brazil',16471600],['France',5657572],['Turkey',5235978],['Russia',5063442],['UK',4480945],['Italy',4213055],['Argentina',3732263],['Germany',3684672],['','']];
document.getElementById('countries').innerHTML = rows.map(([c,n],i)=>
  `<div class="h-[47px] flex items-center justify-between px-[10px] pt-[3px] ${i%2?'bg-white':'bg-[#f3f2f8]'}"><span class="tracking-[-0.2px]">${c}</span><strong class="font-bold tracking-[0.27px]">${n}</strong></div>`).join('');

// Circle markers: x, y, radius
const cases = [[354.700,790.500,40],[319,916,21.500],[368.700,547.500,13],[643.800,706.500,1.500],[583.900,841,1.500],[504,907,1.500],[535.500,926,1.500],[475.500,928,1.500],[472,943,1.500],[493.500,952,1.500],[529.400,947,1.500],[542,947,3],[413,960,1.500],[402.600,973,4],[429.400,976.500,4],[412,985,2.500],[439.700,991,1.500],[447,1013,2.500],[475.500,1020,4],[575,1027,3],[585.500,950.500,1.500],[595,953,1.500],[597,956,1.500],[599,960,1.500],[602,963,1.500],[605,961,1.500],[606,967,1.500],[608,974,1.500],[611,979,1.500],[610,985,1.500],[609,990,1.500],[621,990,1.500],[606,998,1.500],[611,1006,1.500],[547,995,1.500],[554,997.500,1.500],[559,997.500,1.500],
[995,518,1.500],[1115.700,518,3],[1151,518.500,10.300],[1229.500,488,2.500],[1229.500,561.500,3],[1222.500,588.500,4],[1215,601.500,5],[1115.700,601.500,4],[1030.500,625.500,25],[1012.500,624,1.500],[987.500,638.500,5],[1085.500,643.500,9],[1073,663.500,10],[1088,675,2],[1109,661,19],[1186.500,649.500,17.500],[1155,675.500,11.500],[1183,687,6.300],[1272,683.500,14],[1243.500,638.500,4],[1029.500,681.500,1.500],[1059,715,19],[1101.500,704.500,6.300],[1112.500,703,2],[1139.500,701.500,6.300],[1151,715.500,4],[1154.500,723.500,5],[1186.500,704.500,10],[1222.500,715.500,10],[1250.500,704.500,5],[1172.500,735,5],[1193.500,735.500,5],[1222.500,745.500,7.300],[1136.500,746.500,20],[1132.500,737.500,1.500],[1097.500,738,1.500],[1056,750,1.500],[1179.500,755.500,2.500],[1201,756.500,4],[1187,764,3],[1016,773.500,15],[987.500,778,6.300],[1201,782,6.300],[1293.500,782.500,11],[1006,808,1.500],[1148.500,811.500,1.500],[1279,818.500,1.500],[1109,827,5.500],[1009,844,5.300],[1315,818.500,3],[1299,829,4],[1292,848,4],[1296,843,2],[1300,852.500,5.300],[1066,876.500,3],[1165.500,901,3],[1258,885,5],[952,904.500,1.500],[959.500,939.500,1.500],[1016,962,1.500],[1101.500,969.500,1.500],[1180,976.500,1.500],[1258,976.500,3],[1322,977,1.500],[927,988,1.500],[945,984,1.500],[938,999,1.500],[973.500,1006,1.500],[1030.500,991,1.500],[963,1024,2],[1009,1027,1.500],[1030.500,1027,1.500],[1053,1027,1.500],[1060.500,1017,1.500],[1101.500,1013,1.500],[1315,1027,3]];
document.getElementById('cases').innerHTML = cases.map(([x,y,r])=>`<circle cx="${x}" cy="${y}" r="${r}"/>`).join('');

// Small lakes scattered over the Canadian Shield
let s = 11; const rnd = () => (s = (s*16807)%2147483647)/2147483647;
const areas = [[440,30,310,380,75],[160,300,200,150,14],[760,390,190,120,14],[1070,290,230,170,26],[440,340,280,80,20],[540,590,160,40,8]];
document.getElementById('lakes').innerHTML = areas.map(([x,y,w,h,n])=>Array.from({length:n},()=>{
  const cx=x+rnd()*w, cy=y+rnd()*h, a=2+rnd()*5, b=2+rnd()*4;
  return `<path d="M${cx-a} ${cy+b}l${a} ${-b*2} ${a*.6} ${b*.4} ${-a*.4} ${b} ${a*.3} ${b*.8}Z"/>`;}).join('')).join('');

// Daily deaths series
const pts = [[194,778],[204,640],[211,380],[220,325],[229,515],[237,275],[246,640],[255,782],[264,740],[272,333],[281,462],[290,460],[298,520],[307,680],[316,878],[324,800],[331,600],[346,580],[360,605],[368,740],[376,905],[384,850],[392,580],[401,543],[410,650],[418,650],[427,800],[436,915],[444,850],[453,630],[461,598],[470,675],[479,660],[488,800],[497,920],[505,850],[514,661],[522,680],[531,677],[541,690],[550,780],[558,920],[566,800],[574,665],[583,655],[592,627],[600,645],[609,800],[618,915],[626,800],[634,595],[643,680],[650,590],[659,530],[668,640],[678,872],[686,780],[695,550],[703,528],[712,560],[725,730],[738,845],[747,790],[755,520],[764,376],[773,395],[782,470],[790,520],[799,750],[807,690],[815,465],[824,454],[833,480],[842,500],[850,540],[859,745],[867,600],[875,415],[884,420],[893,445],[901,405],[909,470],[919,685],[928,580],[936,370],[945,325],[953,370],[962,420],[970,520],[979,668],[988,580],[996,430],[1011,411],[1020,440],[1031,475],[1039,672],[1048,600],[1055,450],[1064,431],[1073,478],[1082,480],[1091,580],[1100,660],[1109,600],[1117,410],[1126,480],[1134,500],[1143,500],[1150,560],[1158,680],[1167,735],[1176,500],[1194,500],[1203,560],[1211,632]];
const slope = pts.map((p,i)=>{
  if(!i||i===pts.length-1) return 0;
  const a=(p[1]-pts[i-1][1])/(p[0]-pts[i-1][0]), b=(pts[i+1][1]-p[1])/(pts[i+1][0]-p[0]);
  return a*b<=0?0:2*a*b/(a+b);
});
let d = `M${pts[0]}`;
for(let i=1;i<pts.length;i++){const [x0,y0]=pts[i-1],[x1,y1]=pts[i],h=(x1-x0)/3;
  d += `C${x0+h} ${y0+slope[i-1]*h} ${x1-h} ${y1-slope[i]*h} ${x1} ${y1}`;}
document.getElementById('line').setAttribute('d', d);
document.getElementById('area').setAttribute('d', d+'V930H194Z');
</script>
</body>
</html>
